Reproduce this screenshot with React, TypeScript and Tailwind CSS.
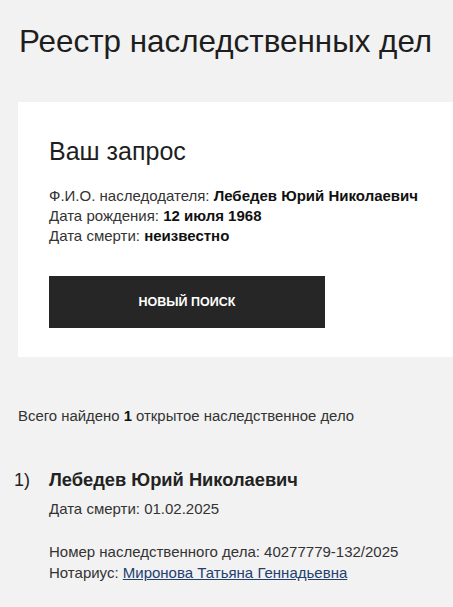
export default function App() {
  return (
    <div className="min-h-[607px] w-[453px] overflow-hidden bg-[#f2f2f2] font-['Liberation_Sans',Arial,sans-serif] text-[#222]">
      <div className="pl-[19px] pt-[22px]">
        <h1 className="text-[31.4px] font-medium leading-[40px] whitespace-nowrap text-[#1e1e1e]">Реестр наследственных дел</h1>
      </div>
      <div className="ml-[18px] mt-[40px] h-[255px] bg-white pl-[31px] pt-[34px]">
        <h2 className="text-[25px] font-medium leading-[30px] text-[#1e1e1e]">Ваш запрос</h2>
        <div className="mt-[20px] text-[15px] leading-[20px] text-[#333] whitespace-nowrap">
          <div>Ф.И.О. наследодателя: <b className="text-[#111]">Лебедев Юрий Николаевич</b></div>
          <div>Дата рождения: <b className="text-[#111]">12 июля 1968</b></div>
          <div>Дата смерти: <b className="text-[#111]">неизвестно</b></div>
        </div>
        <button className="mt-[30px] flex h-[52px] w-[276px] items-center justify-center bg-[#262626] text-[12.5px] font-bold text-white">НОВЫЙ ПОИСК</button>
      </div>
      <div className="pl-[18px] pt-[49px] text-[14.9px] leading-[20px] text-[#333] whitespace-nowrap">
        Всего найдено <b className="text-[#111]">1</b> открытое наследственное дело
      </div>
      <div className="mt-[42px] flex">
        <div className="w-[49px] shrink-0 pl-[14px] text-[18px] leading-[24px]">1)</div>
        <div className="text-[15px] text-[#333] whitespace-nowrap">
          <div className="text-[18.3px] font-bold leading-[24px] text-[#222]">Лебедев Юрий Николаевич</div>
          <div className="mt-[7px] leading-[20px]">Дата смерти: 01.02.2025</div>
          <div className="mt-[22px] leading-[21px]">Номер наследственного дела: 40277779-132/2025</div>
          <div className="leading-[21px]">
            Нотариус: <a href="#" className="text-[#22406f] underline">Миронова Татьяна Геннадьевна</a>
          </div>
        </div>
      </div>
    </div>
  );
}
